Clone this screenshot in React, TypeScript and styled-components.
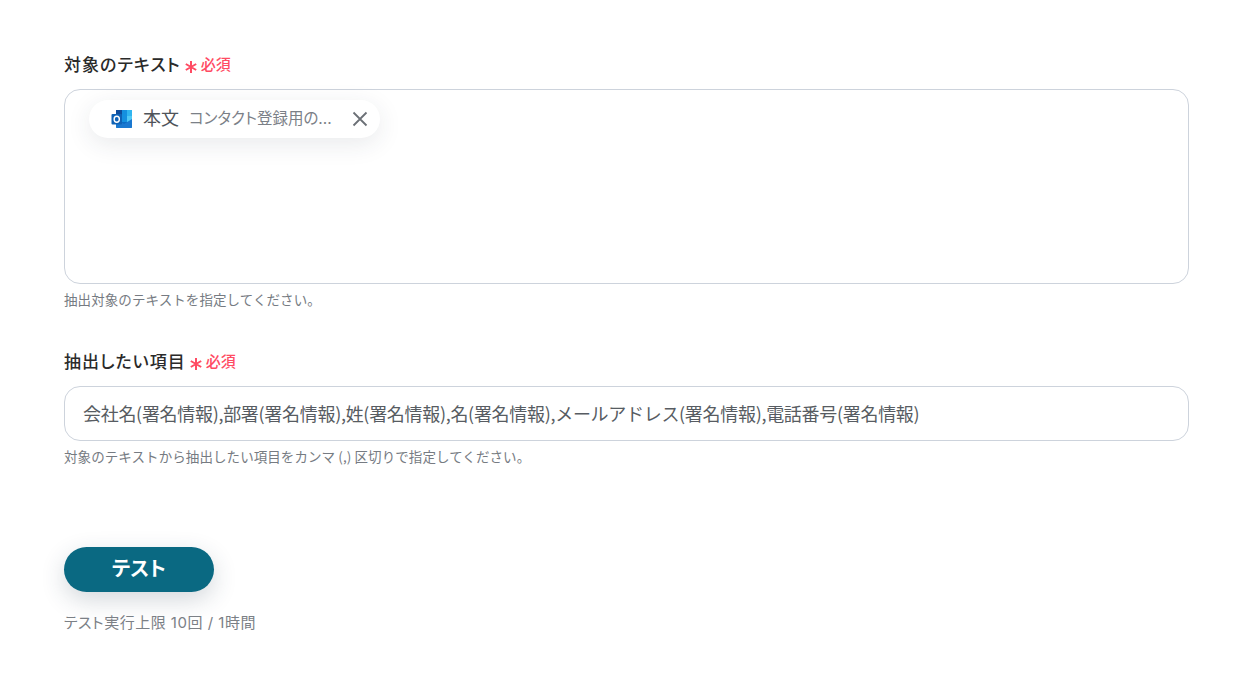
import React from "react";
import styled, { createGlobalStyle } from "styled-components";

const Global = createGlobalStyle`
  html, body { margin: 0; padding: 0; background: #fff; }
  body {
    font-family: Inter, "Noto Sans CJK JP", "Noto Sans", sans-serif;
    font-feature-settings: "palt";
    color: #2a2a2a;
  }
`;

const Page = styled.main`
  width: 1257px;
  height: 682px;
  box-sizing: border-box;
  padding: 53px 68px 0 64px;
  overflow: hidden;
`;

const Field = styled.section<{ $gap: number }>`
  margin-bottom: ${(p) => p.$gap}px;
`;

const LabelRow = styled.div`
  display: flex;
  align-items: center;
  height: 24px;
  margin-bottom: 12px;
`;

const Label = styled.label`
  font-size: 17px;
  font-weight: 500;
  line-height: 24px;
  letter-spacing: 1px;
  color: #2a2a2a;
`;

const Star = styled.span`
  margin-left: 4px;
  margin-top: 3px;
  display: inline-flex;
  color: #ff4b63;
`;

const Required = styled.span`
  margin-left: 4px;
  font-size: 15px;
  font-weight: 500;
  color: #ff4b63;
  line-height: 24px;
`;

const TextArea = styled.div`
  height: 195px;
  box-sizing: border-box;
  border: 1px solid #cdd3dc;
  border-radius: 16px;
  padding: 10px 24px;
`;

const Chip = styled.div`
  display: flex;
  align-items: center;
  width: 291px;
  height: 38px;
  box-sizing: border-box;
  padding: 0 11px 0 22px;
  border-radius: 19px;
  background: #fff;
  box-shadow: 0 6px 24px rgba(40, 50, 70, 0.1);
`;

const ChipName = styled.span`
  margin-left: 10px;
  font-size: 18px;
  line-height: 36px;
  color: #4f545a;
  white-space: nowrap;
`;

const ChipValue = styled.span`
  margin-left: 10px;
  flex: 1;
  font-size: 15.5px;
  line-height: 36px;
  color: #7b8087;
  white-space: nowrap;
`;

const InputBox = styled.div`
  height: 55px;
  box-sizing: border-box;
  border: 1px solid #cdd3dc;
  border-radius: 16px;
  padding: 0 18px 2px;
  display: flex;
  align-items: center;
  font-family: "Noto Sans CJK JP", sans-serif;
  font-feature-settings: normal;
  font-size: 18px;
  letter-spacing: -0.3px;
  color: #575c62;
  white-space: nowrap;
`;

const Help = styled.p`
  margin: 5px 0 0;
  font-family: "Noto Sans CJK JP", sans-serif;
  font-feature-settings: normal;
  font-size: 13.5px;
  line-height: 20px;
  letter-spacing: 0.08px;
  color: #767b82;
`;

const TestButton = styled.button`
  display: block;
  width: 150px;
  height: 45px;
  border: none;
  border-radius: 23px;
  padding: 0 0 5px;
  background: #0a6982;
  color: #fff;
  font-family: inherit;
  font-feature-settings: inherit;
  font-size: 20px;
  font-weight: 700;
  box-shadow: 0 8px 24px rgba(40, 60, 80, 0.2);
`;

const Limit = styled.p`
  margin: 19px 0 0;
  font-size: 15px;
  line-height: 24px;
  letter-spacing: 0.5px;
  color: #7b8086;
`;

const StarIcon = () => (
  <svg width="12" height="12" viewBox="0 0 12 12" fill="none" stroke="currentColor" strokeWidth="2" strokeLinecap="butt">
    <path d="M6 0v12M.8 3l10.4 6M11.2 3L.8 9" />
  </svg>
);

const OutlookIcon = () => (
  <svg width="22" height="20" viewBox="0 0 22 20">
    <rect x="5" y="1" width="16" height="18" rx="1.5" fill="#0a6cc4" />
    <rect x="5" y="1" width="6" height="6" fill="#0f4c9a" />
    <rect x="11" y="1" width="5" height="6" fill="#1490df" />
    <rect x="16" y="1" width="5" height="6" fill="#30b5f0" />
    <rect x="11" y="7" width="5" height="6" fill="#1490df" />
    <rect x="16" y="7" width="5" height="6" fill="#50c8f5" />
    <path d="M5 10l8 5 8-5v8a1 1 0 0 1-1 1H6a1 1 0 0 1-1-1z" fill="#1a78d0" />
    <rect x="0.5" y="5" width="10.5" height="10.5" rx="1" fill="#0f62b5" />
    <ellipse cx="5.75" cy="10.25" rx="2.6" ry="3" fill="none" stroke="#fff" strokeWidth="1.4" />
  </svg>
);

const CloseIcon = () => (
  <svg width="18" height="18" viewBox="0 0 18 18" fill="none" stroke="#6b7076" strokeWidth="1.8" strokeLinecap="butt">
    <path d="M2.5 2.5l13 13M15.5 2.5l-13 13" />
  </svg>
);

export default function App() {
  return (
    <>
      <Global />
      <Page>
        <Field $gap={41}>
          <LabelRow>
            <Label>対象のテキスト</Label>
            <Star><StarIcon /></Star>
            <Required>必須</Required>
          </LabelRow>
          <TextArea>
            <Chip>
              <OutlookIcon />
              <ChipName>本文</ChipName>
              <ChipValue>コンタクト登録用の...</ChipValue>
              <CloseIcon />
            </Chip>
          </TextArea>
          <Help>抽出対象のテキストを指定してください。</Help>
        </Field>
        <Field $gap={81}>
          <LabelRow>
            <Label>抽出したい項目</Label>
            <Star><StarIcon /></Star>
            <Required>必須</Required>
          </LabelRow>
          <InputBox>会社名(署名情報),部署(署名情報),姓(署名情報),名(署名情報),メールアドレス(署名情報),電話番号(署名情報)</InputBox>
          <Help>対象のテキストから抽出したい項目をカンマ (,) 区切りで指定してください。</Help>
        </Field>
        <TestButton>テスト</TestButton>
        <Limit>テスト実行上限 10回 / 1時間</Limit>
      </Page>
    </>
  );
}
